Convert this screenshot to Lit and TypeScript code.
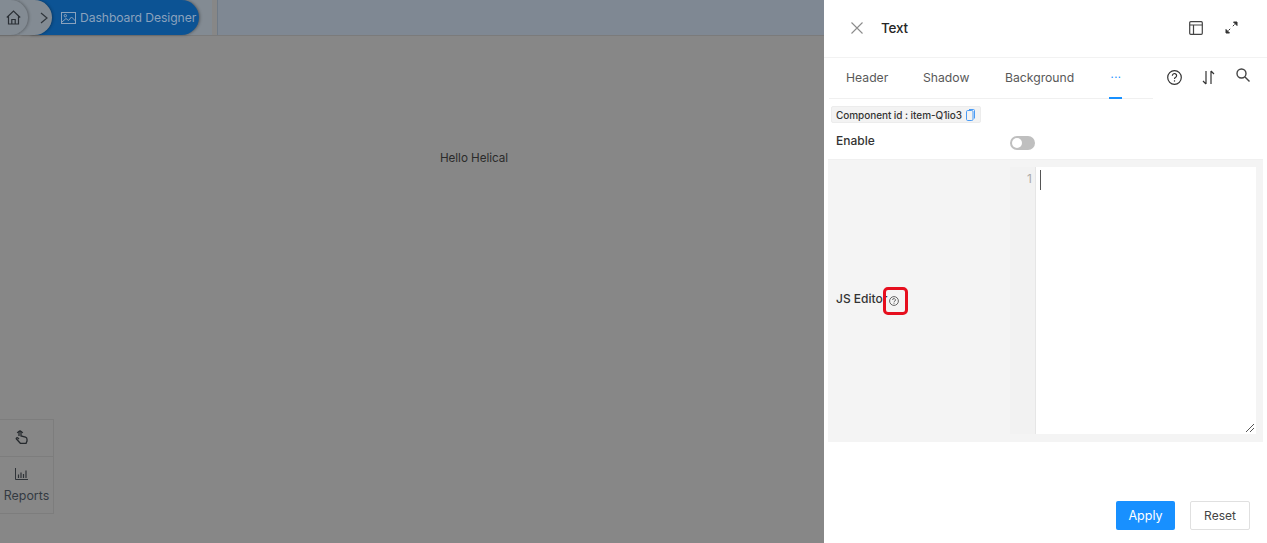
import { LitElement, html, css } from "lit";
import { customElement } from "lit/decorators.js";

@customElement("app-root")
export class AppRoot extends LitElement {
  static styles = css`
    :host { display: block; width: 1267px; height: 543px; overflow: hidden; font-family: "Inter", "Liberation Sans", sans-serif; }
    * { box-sizing: border-box; }
    .page { display: flex; width: 1267px; height: 543px; }
    .left { position: relative; width: 824px; background: #878787; display: flex; flex-direction: column; }
    .top { height: 36px; display: flex; background: #7f8893; border-bottom: 1px solid #7b7b7b; }
    .crumbs { width: 212px; display: flex; position: relative; height: 35px; background: #838b93; }
    .top-sep { width: 5px; background: #878787; }
    .top-rest { flex: 1; border-left: 1px solid #6f7a86; }
    .pill { position: absolute; left: 30px; top: 0; width: 169px; height: 35px; border-radius: 0 18px 18px 0; background: #0c5394; box-shadow: 1px 0 3px rgba(0,0,0,.35); display: flex; align-items: center; padding-left: 31px; gap: 4px; color: #8aa2bd; font-size: 12.2px; white-space: nowrap; letter-spacing: -.1px; }
    .chev { position: absolute; left: 20px; top: 0; width: 32px; height: 35px; border-radius: 0 18px 18px 0; background: #838b93; box-shadow: 1px 0 3px rgba(0,0,0,.3); display: flex; align-items: center; justify-content: flex-end; padding-right: 4px; }
    .home { position: absolute; left: -8px; top: 0; width: 36px; height: 35px; border-radius: 0 18px 18px 0; background: #838b93; box-shadow: 1px 0 3px rgba(0,0,0,.3); display: flex; align-items: center; justify-content: flex-end; padding-right: 7px; }
    .canvas { flex: 1; display: flex; justify-content: center; }
    .hello { margin: 114px 0 0 124px; font-size: 11.7px; color: #2b2b2b; letter-spacing: -.05px; height: 16px; line-height: 16px; }
    .tools { position: absolute; left: 0; top: 419px; width: 54px; height: 95px; border: 1px solid #7d7d7d; border-left: none; display: flex; flex-direction: column; color: #333a42; }
    .tool-a { height: 37px; border-bottom: 1px solid #7d7d7d; display: flex; align-items: center; justify-content: center; padding: 0 11px 3px 0; }
    .tool-b { flex: 1; display: flex; flex-direction: column; align-items: center; padding-top: 11px; font-size: 12.4px; gap: 8px; line-height: 16px; }
    .tool-b svg { margin-right: 10px; }

    .panel { width: 443px; background: #fff; display: flex; flex-direction: column; position: relative; color: #2c2c2c; }
    .head { height: 58px; border-bottom: 1px solid #f2f2f2; display: flex; align-items: center; padding: 0 29px 2px 27px; }
    .title { margin-left: 18px; font-size: 13.5px; font-weight: 500; color: #262626; flex: 1; letter-spacing: -.2px; }
    .head-icons { display: flex; gap: 22px; align-items: center; }
    .tabs-row { display: flex; height: 41px; }
    .tabs { width: 324px; margin-left: 5px; height: 41px; border-bottom: 1px solid #f0f0f0; display: flex; position: relative; padding: 0 0 2px 17px; font-size: 12.2px; color: #595959; align-items: center; }
    .tab { white-space: nowrap; }
    .t1 { width: 77px; } .t2 { width: 82px; } .t3 { width: 104px; }
    .more { color: #1890ff; width: 14px; text-align: center; position: relative; font-size: 11px; line-height: 8px; letter-spacing: .5px; height: 12px; margin-top: 4px; }
    .ink { position: absolute; left: 280px; bottom: -1px; width: 13px; height: 2px; background: #1890ff; }
    .tab-icons { display: flex; gap: 20px; margin-left: 14px; align-items: center; height: 40px; padding-bottom: 2px; }
    .search { margin-top: -4px; margin-left: 1px; }
    .chip-row { padding: 7px 0 0 7px; height: 25px; display: flex; }
    .chip { height: 17px; display: flex; align-items: center; gap: 4px; background: #f3f3f3; border: 1px solid #ececec; border-radius: 2px; padding: 0 5px 0 4px; font-size: 10px; font-weight: 500; color: #333; white-space: nowrap; letter-spacing: -.06px; }
    .enable { height: 36px; display: flex; align-items: center; padding-left: 8px; font-size: 12px; font-weight: 500; color: #333; margin: 0 4px; border-bottom: 1px solid #f0f0f0; }
    .enable span { width: 174px; margin-top: -2px; }
    .toggle { width: 25px; height: 14px; border-radius: 7px; background: #bfbfbf; position: relative; margin-top: 3px; }
    .knob { position: absolute; left: 2px; top: 2px; width: 10px; height: 10px; border-radius: 50%; background: #fff; }
    .js { margin: 0 4px; height: 282px; background: #f4f4f4; display: flex; padding: 7px 7px 8px 8px; position: relative; }
    .js-label { width: 174px; display: flex; align-items: center; font-size: 12px; font-weight: 500; color: #333; white-space: nowrap; padding-bottom: 4px; }
    .js-label span { display: block; width: 53px; }
    .js-label svg { margin-top: 4px; }
    .hl { position: absolute; left: 55px; top: 127px; width: 25px; height: 28px; border: 3px solid #e60f1e; border-radius: 5px; }
    .gutter { width: 25px; background: #f2f2f2; color: #aaa; font-size: 12px; text-align: right; padding: 4px 3px 0 0; line-height: 16px; }
    .ed { flex: 1; background: #fff; position: relative; border-left: 1px solid #e6e6e6; }
    .caret { position: absolute; left: 4px; top: 3px; width: 1px; height: 20px; background: #555; }
    .grip { position: absolute; right: 1px; bottom: 1px; }
    .foot { flex: 1; display: flex; justify-content: flex-end; align-items: flex-start; gap: 15px; padding: 59px 17px 0 0; }
    .btn { height: 29px; border-radius: 2px; display: flex; align-items: center; justify-content: center; }
    .apply { width: 59px; background: #1890ff; color: #fff; font-size: 12.5px; }
    .reset { width: 60px; background: #fff; border: 1px solid #e0e0e0; color: #444; font-size: 12px; }
  `;

  render() {
    return html`<div class="page">
      <div class="left">
        <div class="top">
          <div class="crumbs">
            <div class="pill">
              <svg width="15" height="12" viewBox="0 0 15 12" fill="none" stroke="#8aa2bd" stroke-width="1"><rect x=".5" y=".5" width="14" height="11"/><circle cx="4.300" cy="3.700" r="1.200"/><path d="M1 10l4-3.500 2.500 2L10.500 5l4 4"/></svg>
              <span>Dashboard Designer</span>
            </div>
            <div class="chev"><svg width="8" height="12" viewBox="0 0 8 12" fill="none" stroke="#30363c" stroke-width="1.200"><path d="M1 1l6 5-6 5"/></svg></div>
            <div class="home"><svg width="15" height="15" viewBox="0 0 15 15" fill="none" stroke="#2a2f35" stroke-width="1.200"><path d="M.8 7.500L7.500 1l6.700 6.500M2.500 6.500V14h10V6.500M5.800 14V9.500h3.400V14"/></svg></div>
          </div>
          <div class="top-sep"></div>
          <div class="top-rest"></div>
        </div>
        <div class="canvas"><div class="hello">Hello Helical</div></div>
        <div class="tools">
          <div class="tool-a"><svg width="13" height="15" viewBox="0 0 13 15" fill="none" stroke="#262a2e" stroke-width="1.300"><path d="M4 7V3a1 1 0 012 0v4l4.500 1.200c1 .3 1.500 1 1.500 2V12l-1 2.500H5.500L1.500 10c-.6-.8.3-1.700 1.100-1.200L4 10"/><path d="M2.300 4a3 3 0 015.400 0"/></svg></div>
          <div class="tool-b">
            <svg width="13" height="12" viewBox="0 0 13 12" fill="none" stroke="#2f3338" stroke-width="1"><path d="M.5 0v11.500H13"/><path d="M3.500 6.500v3.500M6 4.500v5.500M8.500 6v4M11 2.500v7.500" stroke-width="1.200"/></svg>
            <span>Reports</span>
          </div>
        </div>
      </div>
      <div class="panel">
        <div class="head">
          <svg width="12" height="12" viewBox="0 0 12 12" fill="none" stroke="#8c8c8c" stroke-width="1.100"><path d="M.5.500l11 11M11.500.500l-11 11"/></svg>
          <div class="title">Text</div>
          <div class="head-icons">
            <svg width="14" height="14" viewBox="0 0 14 14" fill="none" stroke="#444" stroke-width="1.200"><rect x=".7" y=".7" width="12.600" height="12.600" rx="1"/><path d="M.7 4h12.600M4.500 4v9.300"/></svg>
            <svg width="13" height="13" viewBox="0 0 13 13" fill="#333" stroke="#333" stroke-width="1"><path d="M8.500 1h3.500v3.500zM1 12h3.500L1 8.500z"/><path d="M9.500 3.500L7.800 5.200M3.500 9.500l1.700-1.700"/></svg>
          </div>
        </div>
        <div class="tabs-row">
          <div class="tabs">
            <div class="tab t1">Header</div><div class="tab t2">Shadow</div><div class="tab t3">Background</div>
            <div class="more">···</div>
            <div class="ink"></div>
          </div>
          <div class="tab-icons">
            <svg width="15" height="15" viewBox="0 0 15 15" fill="none" stroke="#333" stroke-width="1.200"><circle cx="7.500" cy="7.500" r="6.800"/><path d="M5.400 5.800a2.100 2.100 0 114 .7c-.5.800-1.900 1.100-1.900 2.400"/><path d="M7.500 10.300v1.300"/></svg>
            <svg width="13" height="15" viewBox="0 0 13 15" fill="none" stroke="#333" stroke-width="1.200"><path d="M4 1v13M1 11l3 3M9 14V1M9 1l3 3"/></svg>
            <svg class="search" width="14" height="14" viewBox="0 0 14 14" fill="none" stroke="#444" stroke-width="1.400"><circle cx="5.500" cy="5.500" r="4.500"/><path d="M9 9l4.500 4.500"/></svg>
          </div>
        </div>
        <div class="chip-row"><div class="chip">Component id : item-Q1io3
          <svg width="9" height="12" viewBox="0 0 9 12" fill="none" stroke="#4a9bf5" stroke-width="1"><rect x=".5" y="1.500" width="6.500" height="10" rx="1.200"/><path d="M3 .5h4.500a1 1 0 011 1v8"/></svg></div></div>
        <div class="enable"><span>Enable</span><div class="toggle"><div class="knob"></div></div></div>
        <div class="js">
          <div class="js-label"><span>JS Editor</span><svg width="10" height="10" viewBox="0 0 10 10" fill="none" stroke="#555" stroke-width=".9"><circle cx="5" cy="5" r="4.400"/><path d="M3.600 4a1.400 1.400 0 112.400 1c-.5.500-1 .6-1 1.400M5 7v.8"/></svg></div>
          <div class="hl"></div>
          <div class="gutter">1</div>
          <div class="ed"><div class="caret"></div>
            <svg class="grip" width="10" height="10" viewBox="0 0 10 10" fill="none" stroke="#555" stroke-width="1"><path d="M1 9l8-8M5 9l4-4"/></svg>
          </div>
        </div>
        <div class="foot"><div class="btn apply">Apply</div><div class="btn reset">Reset</div></div>
      </div>
    </div>`;
  }
}
